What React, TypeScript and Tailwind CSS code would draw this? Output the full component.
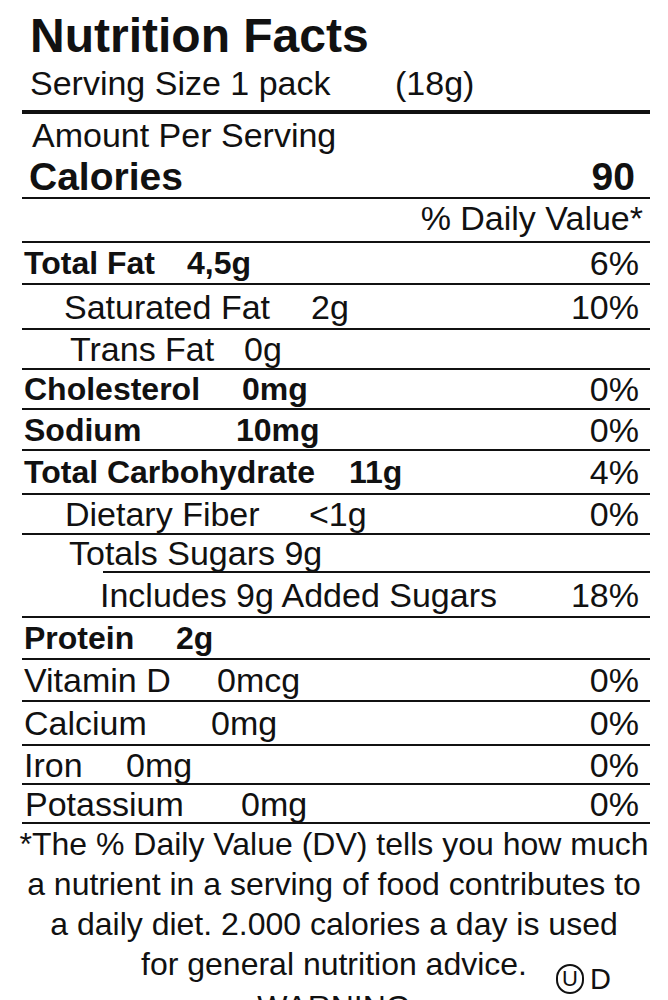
const ROWS = [
  { label: 'Total Fat', value: '4,5g', pct: '6%', bold: true, pad: 'pl-[2px]', lw: 'w-[163px]', h: 'h-[40px]', rule: '' },
  { label: 'Saturated Fat', value: '2g', pct: '10%', bold: false, pad: 'pl-[42px]', lw: 'w-[247px]', h: 'h-[43px]', rule: '' },
  { label: 'Trans Fat', value: '0g', pct: '', bold: false, pad: 'pl-[48px]', lw: 'w-[174px]', h: 'h-[38px]', rule: '' },
  { label: 'Cholesterol', value: '0mg', pct: '0%', bold: true, pad: 'pl-[2px]', lw: 'w-[218px]', h: 'h-[38px]', rule: '' },
  { label: 'Sodium', value: '10mg', pct: '0%', bold: true, pad: 'pl-[2px]', lw: 'w-[212px]', h: 'h-[39px]', rule: '' },
  { label: 'Total Carbohydrate', value: '11g', pct: '4%', bold: true, pad: 'pl-[2px]', lw: 'w-[325px]', h: 'h-[42px]', rule: '' },
  { label: 'Dietary Fiber', value: '<1g', pct: '0%', bold: false, pad: 'pl-[43px]', lw: 'w-[244px]', h: 'h-[38px]', rule: '' },
  { label: 'Totals Sugars 9g', value: '', pct: '', bold: false, pad: 'pl-[47px]', lw: '', h: 'h-[36px]', rule: '' },
  { label: 'Includes 9g Added Sugars', value: '', pct: '18%', bold: false, pad: 'pl-[78px]', lw: '', h: 'h-[43px]', rule: 'ml-[81px]' },
  { label: 'Protein', value: '2g', pct: '', bold: true, pad: 'pl-[2px]', lw: 'w-[152px]', h: 'h-[40px]', rule: '' },
  { label: 'Vitamin D', value: '0mcg', pct: '0%', bold: false, pad: 'pl-[2px]', lw: 'w-[193px]', h: 'h-[40px]', rule: '' },
  { label: 'Calcium', value: '0mg', pct: '0%', bold: false, pad: 'pl-[2px]', lw: 'w-[187px]', h: 'h-[42px]', rule: '' },
  { label: 'Iron', value: '0mg', pct: '0%', bold: false, pad: 'pl-[2px]', lw: 'w-[102px]', h: 'h-[37px]', rule: '' },
  { label: 'Potassium', value: '0mg', pct: '0%', bold: false, pad: 'pl-[3px]', lw: 'w-[216px]', h: 'h-[37px]', rule: '' },
];

function Rule({ className = '' }: { className?: string }) {
  return <div className={`h-[2px] bg-[#111] ${className}`} />;
}

export default function App() {
  return (
    <div className="h-[1000px] overflow-hidden bg-white text-[#111] font-['Liberation_Sans',Arial,sans-serif]">
      <div className="ml-[22px] mr-[18px]">
        {/* header */}
        <h1 className="pl-[8px] pt-[11px] text-[48px] leading-[49px] font-bold whitespace-nowrap">Nutrition Facts</h1>
        <div className="pl-[8px] mt-[6px] text-[34px] leading-[34px] whitespace-nowrap">
          <span className="inline-block w-[365px]">Serving Size 1 pack</span>
          <span>(18g)</span>
        </div>
        <div className="mt-[10px] h-[4px] bg-[#111]" />
        <div className="pl-[10px] mt-[4px] text-[34px] leading-[34px] whitespace-nowrap">Amount Per Serving</div>
        <div className="mt-[5px] flex items-center justify-between pl-[7px] pr-[15px] text-[39px] leading-[39px] font-bold">
          <span>Calories</span>
          <span>90</span>
        </div>
        <Rule className="mt-[1px]" />
        <div className="mt-[2px] pr-[7px] text-right text-[34px] leading-[34px]">% Daily Value*</div>
        <Rule className="mt-[6px]" />

        {/* nutrient rows */}
        {ROWS.map((row, i) => (
          <div key={row.label}>
            {i > 0 && <Rule className={row.rule} />}
            <div className={`flex items-center whitespace-nowrap pr-[11px] leading-none ${row.h} ${row.pad} ${row.bold ? 'text-[32px] font-bold' : 'text-[34px]'}`}>
              {row.value ? (
                <>
                  <span className={`inline-block ${row.lw}`}>{row.label}</span>
                  <span>{row.value}</span>
                </>
              ) : (
                <span>{row.label}</span>
              )}
              <span className="ml-auto text-[34px] font-normal">{row.pct}</span>
            </div>
          </div>
        ))}
        <Rule />
      </div>

      {/* footnote */}
      <div className="text-center text-[32px] leading-[40px] whitespace-nowrap">
        <div>*The % Daily Value (DV) tells you how much</div>
        <div>a nutrient in a serving of food contributes to</div>
        <div>a daily diet. 2.000 calories a day is used</div>
        <div>
          <span className="relative inline-block">
            for general nutrition advice.
            <span className="absolute left-full top-[20px] ml-[29px] flex items-center gap-[6px]">
              <span className="flex h-[30px] w-[28px] items-center justify-center rounded-full border-2 border-[#111] text-[22px] leading-none">U</span>
              <span className="text-[29px] leading-none">D</span>
            </span>
          </span>
        </div>
        <div className="pt-[3px]">WARNING</div>
      </div>
    </div>
  );
}
